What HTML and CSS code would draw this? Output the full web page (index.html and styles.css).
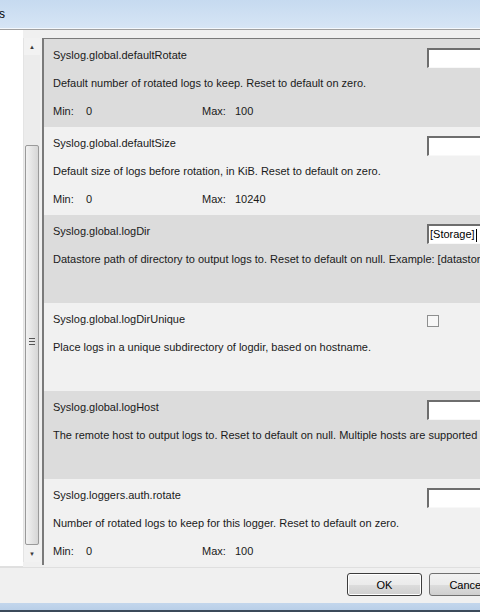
FILE: index.html
```html
<!DOCTYPE html>
<html>
<head>
<meta charset="utf-8">
<link rel="stylesheet" href="styles.css">
</head>
<body>
<div class="window">
  <div class="titlebar"><span class="title">s</span></div>
  <div class="main">
    <div class="tree"></div>
    <div class="scrollbar">
      <div class="arrow up">&#9650;</div>
      <div class="track">
        <div class="thumb"><span class="grip"></span></div>
      </div>
      <div class="arrow down">&#9660;</div>
    </div>
    <div class="list">
      <div class="row dark">
        <div class="line head"><span class="name">Syslog.global.defaultRotate</span><span class="field input"></span></div>
        <div class="line">Default number of rotated logs to keep. Reset to default on zero.</div>
        <div class="line range"><span class="lbl">Min:</span><span class="val">0</span><span class="lbl">Max:</span><span class="val">100</span></div>
      </div>
      <div class="row light">
        <div class="line head"><span class="name">Syslog.global.defaultSize</span><span class="field input"></span></div>
        <div class="line">Default size of logs before rotation, in KiB. Reset to default on zero.</div>
        <div class="line range"><span class="lbl">Min:</span><span class="val">0</span><span class="lbl">Max:</span><span class="val">10240</span></div>
      </div>
      <div class="row dark">
        <div class="line head"><span class="name">Syslog.global.logDir</span><span class="field input">[Storage]<span class="caret"></span></span></div>
        <div class="line">Datastore path of directory to output logs to. Reset to default on null. Example: [datastore1] /vmfs/volumes/logs</div>
      </div>
      <div class="row light">
        <div class="line head"><span class="name">Syslog.global.logDirUnique</span><span class="field checkbox"></span></div>
        <div class="line">Place logs in a unique subdirectory of logdir, based on hostname.</div>
      </div>
      <div class="row dark">
        <div class="line head"><span class="name">Syslog.global.logHost</span><span class="field input"></span></div>
        <div class="line">The remote host to output logs to. Reset to default on null. Multiple hosts are supported and should be separated with comma.</div>
      </div>
      <div class="row light">
        <div class="line head"><span class="name">Syslog.loggers.auth.rotate</span><span class="field input"></span></div>
        <div class="line">Number of rotated logs to keep for this logger. Reset to default on zero.</div>
        <div class="line range"><span class="lbl">Min:</span><span class="val">0</span><span class="lbl">Max:</span><span class="val">100</span></div>
      </div>
    </div>
  </div>
  <div class="footer">
    <button class="btn default">OK</button>
    <button class="btn">Cancel</button>
  </div>
  <div class="frame-bottom"></div>
</div>
</body>
</html>
```
FILE: styles.css
```css
html, body {
  margin: 0;
  padding: 0;
}
body {
  width: 480px;
  height: 612px;
  overflow: hidden;
  font-family: "Liberation Sans", Arial, sans-serif;
  font-size: 11px;
  color: #1a1a1a;
  background: #f0f0f0;
}
.window {
  width: 480px;
  height: 612px;
  display: flex;
  flex-direction: column;
  overflow: hidden;
}
.titlebar {
  height: 29px;
  flex: none;
  background: linear-gradient(#c6daf0, #d6e5f5);
  border-bottom: 1px solid #f4f8fc;
  display: flex;
  align-items: center;
  box-sizing: border-box;
}
.title {
  font-size: 12px;
  color: #000;
  margin-left: -1px;
}
.main {
  height: 538px;
  flex: none;
  display: flex;
  background: #f0f0f0;
  border-top: 1px solid #a0a0a0;
  box-sizing: border-box;
}
.tree {
  width: 23px;
  flex: none;
  background: #fff;
  border-bottom: 1px solid #e0e0e0;
}
.scrollbar {
  width: 17px;
  flex: none;
  margin-top: 8px;
  margin-bottom: 5px;
  display: flex;
  flex-direction: column;
  background: #ececec;
  border-left: 1px solid #e4e4e4;
  box-sizing: border-box;
}
.arrow {
  height: 17px;
  flex: none;
  font-size: 6px;
  color: #3c3c3c;
  display: flex;
  align-items: center;
  justify-content: center;
  background: #f2f2f2;
}
.track {
  flex: 1;
  display: flex;
  flex-direction: column;
  padding-top: 90px;
}
.thumb {
  flex: 1;
  margin: 0 1px;
  border: 1px solid #9a9a9a;
  border-radius: 2px;
  background: linear-gradient(90deg, #f2f2f2, #e4e4e4 50%, #d6d6d6);
  display: flex;
  align-items: center;
  justify-content: center;
  padding-bottom: 8px;
}
.grip {
  width: 6px;
  height: 5px;
  border-top: 1px solid #555;
  border-bottom: 1px solid #555;
  position: relative;
}
.grip::after {
  content: "";
  position: absolute;
  left: 0;
  right: 0;
  top: 2px;
  border-top: 1px solid #555;
}
.list {
  flex: 1;
  margin-top: 8px;
  margin-left: 2px;
  margin-bottom: 2px;
  border-left: 2px solid #7a7a7a;
  border-top: 1px solid #7a7a7a;
  overflow: hidden;
  min-width: 0;
}
.row {
  height: 88px;
  box-sizing: border-box;
  padding: 2px 0 0 9px;
}
.row.dark { background: #dcdcdc; }
.row.light { background: #f1f1f1; }
.line {
  height: 28px;
  line-height: 28px;
  white-space: nowrap;
  position: relative;
}
.range { display: flex; }
.lbl { width: 33px; }
.val { width: 116px; }
.field {
  position: absolute;
  left: 374px;
  top: 7px;
}
.field.input {
  width: 80px;
  height: 20px;
  box-sizing: border-box;
  background: #fff;
  border: 1px solid #f8f8f8;
  border-top: 2px solid #6e6e6e;
  border-left: 2px solid #6e6e6e;
  line-height: 16px;
  padding-left: 1px;
  color: #000;
}
.caret {
  display: inline-block;
  width: 1px;
  height: 13px;
  background: #000;
  vertical-align: middle;
  margin-left: 1px;
}
.field.checkbox {
  top: 10px;
  left: 374px;
  width: 12px;
  height: 12px;
  box-sizing: border-box;
  border: 1px solid #8e8f8f;
  background: #f7f7f7;
}
.footer {
  height: 36px;
  flex: none;
  background: #f0f0f0;
  border-top: 1px solid #dfdfdf;
  display: flex;
  align-items: flex-start;
  padding: 5px 0 0 347px;
  gap: 7px;
  box-sizing: border-box;
}
.btn {
  flex: none;
  width: 75px;
  height: 23px;
  font-family: "Liberation Sans", Arial, sans-serif;
  font-size: 11px;
  color: #000;
  background: linear-gradient(#f2f2f2, #ebebeb 50%, #dddddd 51%, #cfcfcf);
  border: 1px solid #707070;
  border-radius: 3px;
  padding: 0;
}
.btn.default {
  border-color: #3c3c3c;
  box-shadow: inset 0 0 0 1px #fff;
}
.frame-bottom {
  flex: 1;
  background: linear-gradient(#c3d6ec, #b9cfe8);
  border-bottom: 2px solid #3b4a5a;
}
```
